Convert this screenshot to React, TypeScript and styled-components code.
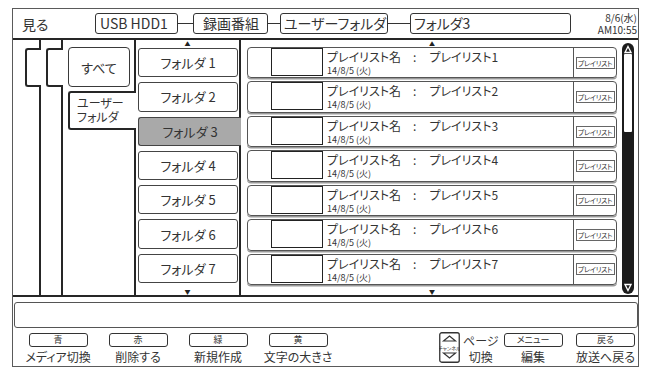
import React from 'react';
import styled, { createGlobalStyle } from 'styled-components';

const GlobalStyle = createGlobalStyle`
  html, body {
    margin: 0;
    padding: 0;
    background: #fff;
  }
  body {
    font-family: 'Noto Sans CJK JP', 'Noto Sans', sans-serif;
    font-feature-settings: 'palt';
    color: #333;
  }
  * {
    box-sizing: border-box;
  }
`;

const LINE = '#262626';

const Frame = styled.div`
  margin: 8px 0 0 12px;
  width: 627px;
  height: 359px;
  border: 1px solid #5a5a5a;
  display: flex;
  flex-direction: column;
`;

const Header = styled.div`
  height: 29px;
  display: flex;
  align-items: center;
`;

const Title = styled.div`
  width: 82px;
  padding-left: 9px;
  font-size: 14px;
  line-height: 16px;
`;

const Breadcrumbs = styled.div`
  display: flex;
  align-items: center;
`;

const Crumb = styled.div<{ $w: number; $pad: number }>`
  width: ${(p) => p.$w}px;
  height: 21px;
  padding-left: ${(p) => p.$pad}px;
  border: 1px solid #333;
  border-radius: 3px;
  font-size: 14px;
  line-height: 19px;
  white-space: nowrap;
`;

const Connector = styled.div<{ $w: number }>`
  width: ${(p) => p.$w}px;
  height: 1px;
  background: #333;
`;

const Clock = styled.div`
  margin-left: auto;
  padding-right: 1px;
  display: flex;
  flex-direction: column;
  align-items: flex-end;
  gap: 1px;
  font-size: 10px;
  line-height: 11px;
  color: #333;
`;

const Main = styled.div`
  height: 259px;
  border-top: 2px solid ${LINE};
  border-bottom: 2px solid ${LINE};
  display: flex;
`;

const Strip = styled.div<{ $w: number }>`
  width: ${(p) => p.$w}px;
  flex-shrink: 0;
  display: flex;
  flex-direction: column;
`;

const Body = styled.div`
  flex: 1;
  display: flex;
  border-left: 2px solid ${LINE};
`;

const OpenTab = styled.div<{ $left: number; $top: number; $h: number }>`
  position: relative;
  z-index: 1;
  margin: ${(p) => p.$top}px -2px 0 ${(p) => p.$left}px;
  height: ${(p) => p.$h}px;
  background: #fff;
  border: 2px solid ${LINE};
  border-right: none;
  border-radius: 3px 0 0 3px;
`;

const UserTabText = styled.div`
  padding: 3px 0 0 7px;
  display: flex;
  flex-direction: column;
  gap: 1px;
  font-size: 12px;
  line-height: 13px;
`;

const AllTab = styled.div`
  margin: 7px 0 0 5px;
  width: 62px;
  height: 40px;
  border: 1.5px solid #3a3a3a;
  border-radius: 4px;
  display: flex;
  align-items: center;
  justify-content: center;
  font-size: 13px;
`;

const FolderColumn = styled.div`
  width: 105px;
  flex-shrink: 0;
  border-right: 2px solid ${LINE};
  display: flex;
  flex-direction: column;
`;

const Arrow = styled.div<{ $h: number }>`
  height: ${(p) => p.$h}px;
  font-size: 6px;
  line-height: ${(p) => p.$h}px;
  text-align: center;
  color: #222;
`;

const FolderItem = styled.div<{ $active?: boolean }>`
  position: relative;
  z-index: 1;
  height: 30px;
  margin: 0 ${(p) => (p.$active ? '-2px' : '1px')} 5px 2px;
  border: 1px solid #444;
  border-right: ${(p) => (p.$active ? 'none' : '1px solid #444')};
  border-radius: ${(p) => (p.$active ? '3px 0 0 3px' : '3px')};
  background: ${(p) => (p.$active ? '#a9a9a9' : '#fff')};
  display: flex;
  align-items: center;
  justify-content: center;
  font-size: 13px;
  &:last-of-type {
    margin-bottom: 1px;
  }
`;

const PlaylistPanel = styled.div`
  flex: 1;
  display: flex;
`;

const List = styled.div`
  width: 376px;
  padding-left: 6px;
  display: flex;
  flex-direction: column;
`;

const Row = styled.div`
  height: 32px;
  margin-bottom: 3px;
  border: 1px solid #555;
  border-radius: 4px;
  box-shadow: 0 1.5px 0 #999;
  display: flex;
`;

const Lead = styled.div`
  width: 23px;
`;

const Thumb = styled.div`
  width: 52px;
  height: 28px;
  border: 1.5px solid #222;
  border-top-width: 1px;
`;

const Info = styled.div`
  flex: 1;
  padding: 2px 0 0 4px;
`;

const Name = styled.div`
  font-size: 12px;
  line-height: 14px;
  display: flex;
`;

const Colon = styled.span`
  margin: 0 13px 0 12px;
`;

const DateText = styled.div`
  margin-top: 2px;
  font-size: 9px;
  line-height: 10px;
  color: #333;
`;

const BadgeCell = styled.div`
  width: 43px;
  border-left: 1px solid #555;
  display: flex;
  align-items: center;
  justify-content: center;
`;

const Badge = styled.div`
  width: 39px;
  height: 12px;
  border: 1px solid #666;
  font-size: 7px;
  line-height: 10px;
  text-align: center;
  color: #333;
  letter-spacing: -0.3px;
`;

const Scrollbar = styled.div`
  margin: 3px 0 0 5px;
  width: 12px;
  height: 251px;
  border-radius: 6px;
  background: #1c1c1c;
  display: flex;
  flex-direction: column;
  align-items: center;
  padding: 2px;
`;

const Cap = styled.svg`
  width: 8px;
  height: 9px;
  flex-shrink: 0;
`;

const Track = styled.div`
  flex: 1;
  width: 100%;
  display: flex;
  flex-direction: column;
`;

const Window = styled.div<{ $h: number }>`
  height: ${(p) => p.$h}px;
  background: #fff;
  border-radius: 1px;
`;

const MessageBar = styled.div`
  margin: 5px 0 0 1px;
  width: 624px;
  height: 26px;
  border: 1px solid #555;
  border-radius: 3px;
`;

const Footer = styled.div`
  flex: 1;
  display: flex;
  padding: 5px 0 0 5px;
`;

const KeyGroup = styled.div<{ $w: number; $ml?: number }>`
  width: ${(p) => p.$w}px;
  margin-left: ${(p) => p.$ml ?? 0}px;
  display: flex;
  flex-direction: column;
  align-items: center;
`;

const KeyBox = styled.div`
  width: 59px;
  height: 14px;
  border: 1px solid #333;
  border-radius: 3px;
  font-size: 9px;
  line-height: 12px;
  text-align: center;
`;

const KeyLabel = styled.div`
  margin-top: 3px;
  font-size: 12px;
  line-height: 14px;
  white-space: nowrap;
`;

const PageGroup = styled.div`
  margin-left: 101px;
  width: 64px;
  display: flex;
  align-items: flex-start;
`;

const ChannelIcon = styled.svg`
  width: 21px;
  height: 31px;
  margin-top: -1px;
  flex-shrink: 0;
`;

const PageText = styled.div`
  margin-left: 3px;
  display: flex;
  flex-direction: column;
  align-items: center;
  font-size: 12px;
  line-height: 16px;
`;

const folders = [1, 2, 3, 4, 5, 6, 7];

function ScrollCap({ up }: { up?: boolean }) {
  return (
    <Cap viewBox="0 0 8 9">
      {up ? (
        <path d="M4 1.5 L7 7.5 L1 7.5 Z" fill="none" stroke="#fff" strokeWidth="1.3" />
      ) : (
        <path d="M4 7.5 L7 1.5 L1 1.5 Z" fill="none" stroke="#fff" strokeWidth="1.3" />
      )}
    </Cap>
  );
}

export default function App() {
  return (
    <>
      <GlobalStyle />
      <Frame>
        <Header>
          <Title>見る</Title>
          <Breadcrumbs>
            <Crumb $w={83} $pad={4}>USB HDD1</Crumb>
            <Connector $w={15} />
            <Crumb $w={75} $pad={9}>録画番組</Crumb>
            <Connector $w={12} />
            <Crumb $w={108} $pad={3}>ユーザーフォルダ</Crumb>
            <Connector $w={22} />
            <Crumb $w={161} $pad={3}>フォルダ3</Crumb>
          </Breadcrumbs>
          <Clock>
            <span>8/6(水)</span>
            <span>AM10:55</span>
          </Clock>
        </Header>

        <Main>
          <Strip $w={26}>
            <OpenTab $left={12} $top={8} $h={39} />
          </Strip>
          <Body>
            <Strip $w={20}>
              <OpenTab $left={5} $top={8} $h={39} />
            </Strip>
            <Body>
              <Strip $w={71}>
                <AllTab>すべて</AllTab>
                <OpenTab $left={5} $top={4} $h={39}>
                  <UserTabText>
                    <span>ユーザー</span>
                    <span>フォルダ</span>
                  </UserTabText>
                </OpenTab>
              </Strip>
              <Body>
                <FolderColumn>
                  <Arrow $h={8}>▲</Arrow>
                  {folders.map((n) => (
                    <FolderItem key={n} $active={n === 3}>
                      フォルダ {n}
                    </FolderItem>
                  ))}
                  <Arrow $h={7}>▼</Arrow>
                </FolderColumn>

                <PlaylistPanel>
                  <List>
                    <Arrow $h={7}>▲</Arrow>
                    {folders.map((n) => (
                      <Row key={n}>
                        <Lead />
                        <Thumb />
                        <Info>
                          <Name>
                            <span>プレイリスト名</span>
                            <Colon>:</Colon>
                            <span>プレイリスト{n}</span>
                          </Name>
                          <DateText>14/8/5 (火)</DateText>
                        </Info>
                        <BadgeCell>
                          <Badge>プレイリスト</Badge>
                        </BadgeCell>
                      </Row>
                    ))}
                    <Arrow $h={7}>▼</Arrow>
                  </List>
                  <Scrollbar>
                    <ScrollCap up />
                    <Track>
                      <Window $h={78} />
                    </Track>
                    <ScrollCap />
                  </Scrollbar>
                </PlaylistPanel>
              </Body>
            </Body>
          </Body>
        </Main>

        <MessageBar />

        <Footer>
          <KeyGroup $w={80}>
            <KeyBox>青</KeyBox>
            <KeyLabel>メディア切換</KeyLabel>
          </KeyGroup>
          <KeyGroup $w={80}>
            <KeyBox>赤</KeyBox>
            <KeyLabel>削除する</KeyLabel>
          </KeyGroup>
          <KeyGroup $w={80}>
            <KeyBox>緑</KeyBox>
            <KeyLabel>新規作成</KeyLabel>
          </KeyGroup>
          <KeyGroup $w={80}>
            <KeyBox>黄</KeyBox>
            <KeyLabel>文字の大きさ</KeyLabel>
          </KeyGroup>
          <PageGroup>
            <ChannelIcon viewBox="0 0 21 31">
              <rect x="0.75" y="0.75" width="19.5" height="29.5" rx="2" fill="none" stroke="#333" strokeWidth="1.3" />
              <path d="M4.5 9 L10.5 4 L16.5 9 Z" fill="none" stroke="#333" strokeWidth="1.2" />
              <text x="10.5" y="17.5" fontSize="5" textAnchor="middle" fill="#333">
                チャンネル
              </text>
              <path d="M4.5 21 L10.5 26 L16.5 21 Z" fill="none" stroke="#333" strokeWidth="1.2" />
            </ChannelIcon>
            <PageText>
              <span>ページ</span>
              <span>切換</span>
            </PageText>
          </PageGroup>
          <KeyGroup $w={60}>
            <KeyBox>メニュー</KeyBox>
            <KeyLabel>編集</KeyLabel>
          </KeyGroup>
          <KeyGroup $w={59} $ml={13}>
            <KeyBox>戻る</KeyBox>
            <KeyLabel>放送へ戻る</KeyLabel>
          </KeyGroup>
        </Footer>
      </Frame>
    </>
  );
}
